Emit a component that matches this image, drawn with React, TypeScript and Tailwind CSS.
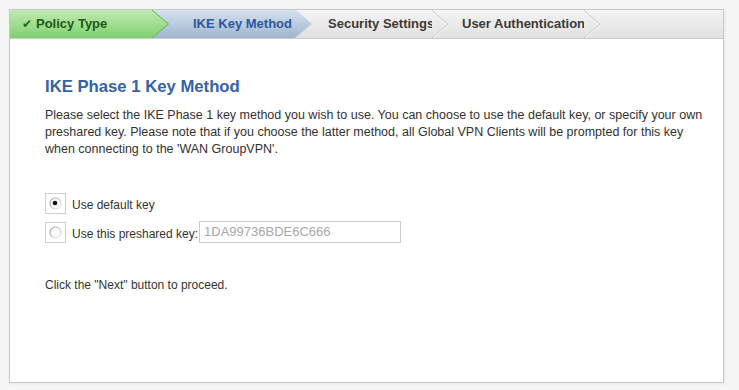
import React from "react"

type Step = { label: string; w: string; pl: string; kind: "done" | "active" | "todo"; z: string }

const steps: Step[] = [
  { label: "Policy Type", w: "w-[143px]", pl: "pl-[12px]", kind: "done", z: "z-[4]" },
  { label: "IKE Key Method", w: "w-[143px]", pl: "pl-[40px]", kind: "active", z: "z-[3]" },
  { label: "Security Settings", w: "w-[137px]", pl: "pl-[32px]", kind: "todo", z: "z-[2]" },
  { label: "User Authentication", w: "w-[152px]", pl: "pl-[29px]", kind: "todo", z: "z-[1]" },
]

const Arrow = ({ kind }: { kind: Step["kind"] }) => {
  const id = "g-" + kind
  const stops =
    kind === "done"
      ? ["#c0eab3", "#7fd06e"]
      : kind === "active"
        ? ["#d6e2ee", "#9fb5cf"]
        : ["#f4f4f4", "#e1e1e1"]
  const edge = kind === "done" ? "#5db84b" : kind === "active" ? "#c9d6e3" : "#c9c9c9"
  return (
    <svg className="absolute top-0 right-[-17px]" width="18" height="28" viewBox="0 0 18 28">
      <defs>
        <linearGradient id={id} x1="0" y1="0" x2="0" y2="1">
          <stop offset="0" stopColor={stops[0]} />
          <stop offset="1" stopColor={stops[1]} />
        </linearGradient>
      </defs>
      <polygon points="0,0 17,14 0,28" fill={`url(#${id})`} />
      {kind === "todo" && <polyline points="1,0 17.5,14 1,28" fill="none" stroke="#ffffff" strokeWidth="1" />}
      <polyline points="0,0 16.5,14 0,28" fill="none" stroke={edge} strokeWidth="1" />
    </svg>
  )
}

const Tab = ({ s }: { s: Step }) => {
  const bg =
    s.kind === "done"
      ? "bg-linear-to-b from-[#c0eab3] to-[#7fd06e] text-[#1d5a12]"
      : s.kind === "active"
        ? "bg-linear-to-b from-[#d6e2ee] to-[#9fb5cf] text-[#2c57a6]"
        : "text-[#3a3a3a]"
  return (
    <div className={`relative h-full flex items-center shrink-0 ${s.w} ${s.pl} ${s.z} ${bg}`}>
      {s.kind === "done" && <span className="text-[12px] mr-[4px] text-[#236f16]">✔</span>}
      <span className="font-bold text-[13px] whitespace-nowrap">{s.label}</span>
      <Arrow kind={s.kind} />
    </div>
  )
}

const Radio = ({ checked }: { checked?: boolean }) => (
  <div className="w-[21px] h-[21px] border border-[#cfcfcf] bg-white flex items-center justify-center shrink-0">
    <svg width="13" height="13" viewBox="0 0 13 13">
      <defs>
        <linearGradient id="rg" x1="0" y1="0" x2="1" y2="1">
          <stop offset="0" stopColor="#9a9a9a" />
          <stop offset="1" stopColor="#f0f0f0" />
        </linearGradient>
      </defs>
      <circle cx="6.5" cy="6.5" r="5.5" fill="#fbfbfb" stroke="url(#rg)" strokeWidth="1.2" />
      {checked && <circle cx="6" cy="6" r="2.3" fill="#111" />}
    </svg>
  </div>
)

export default function App() {
  return (
    <div className="w-[739px] h-[390px] bg-[#f5f5f5] pt-[9px] pl-[9px] font-['Liberation_Sans',Arial,sans-serif]">
      <div className="w-[715px] h-[374px] border border-[#c8c8c8] bg-white shadow-[1px_1px_3px_rgba(0,0,0,0.06)]">
        <div className="h-[29px] border-b border-[#cccccc] bg-linear-to-b from-[#f4f4f4] to-[#e1e1e1] flex">
          {steps.map((s) => (
            <Tab key={s.label} s={s} />
          ))}
        </div>
        <div className="pl-[35px] pt-[38px] text-[#333333]">
          <h2 className="text-[16.7px] leading-[20px] font-bold text-[#3462ab]">IKE Phase 1 Key Method</h2>
          <p className="mt-[10px] text-[12.5px] leading-[17px] whitespace-nowrap">
            Please select the IKE Phase 1 key method you wish to use. You can choose to use the default key, or specify your own
            <br />
            preshared key. Please note that if you choose the latter method, all Global VPN Clients will be prompted for this key
            <br />
            when connecting to the 'WAN GroupVPN'.
          </p>
          <div className="mt-[34px] flex flex-col gap-[7px]">
            <div className="h-[22px] flex items-center">
              <Radio checked />
              <span className="ml-[6px] text-[12px] pt-[3px]">Use default key</span>
            </div>
            <div className="h-[22px] flex items-center">
              <Radio />
              <span className="ml-[6px] text-[12px] pt-[3px]">Use this preshared key:</span>
              <div className="ml-[1px] w-[202px] h-[22px] border border-[#cccccc] flex items-center pl-[4px] text-[13px] text-[#a8a8a8]">
                1DA99736BDE6C666
              </div>
            </div>
          </div>
          <p className="mt-[34px] text-[12px] leading-[17px]">Click the "Next" button to proceed.</p>
        </div>
      </div>
    </div>
  )
}
